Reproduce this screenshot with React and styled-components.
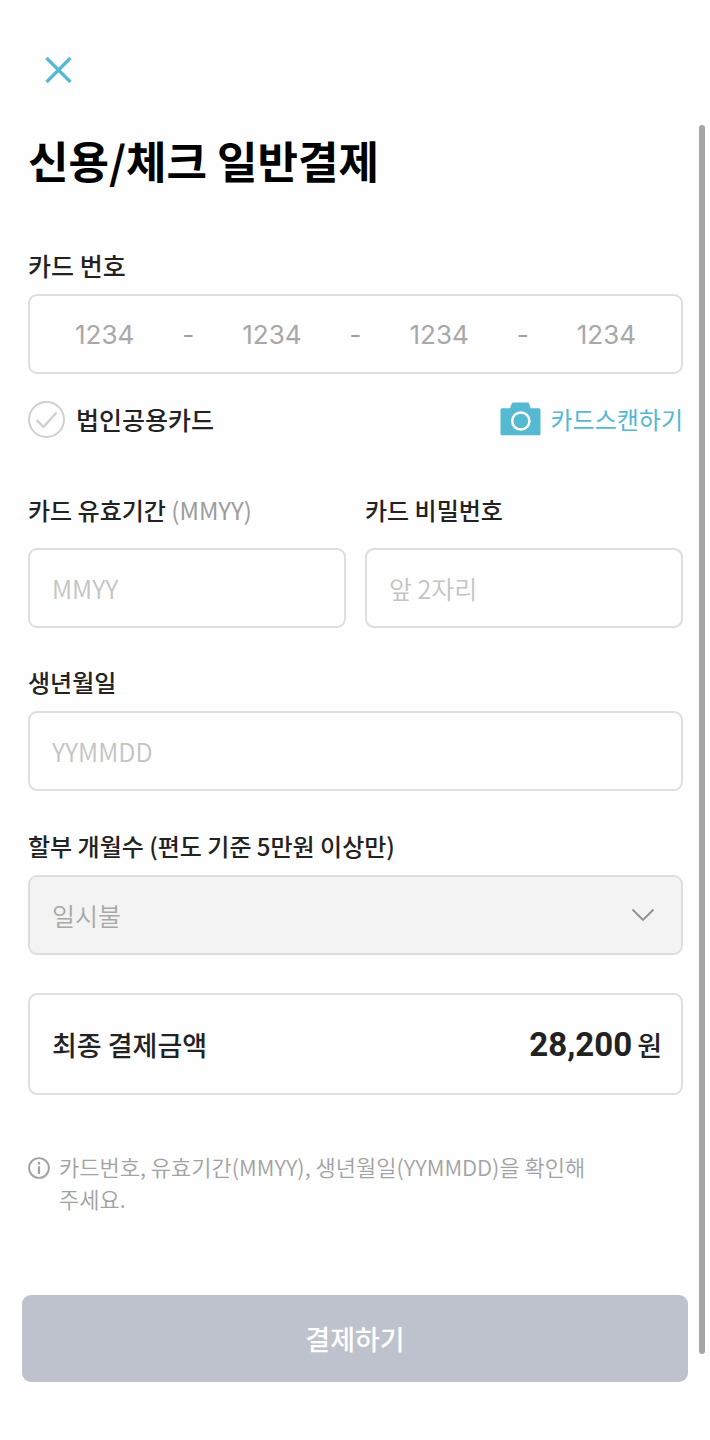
import React from "react";
import styled, { createGlobalStyle } from "styled-components";

const GlobalStyle = createGlobalStyle`
  *, *::before, *::after { box-sizing: border-box; }
  body {
    margin: 0;
    background: #fefefe;
    color: #222;
    font-family: "Noto Sans CJK KR", "Noto Sans", sans-serif;
  }
  button, input, select { font-family: inherit; }
`;

const Page = styled.div`
  position: relative;
  display: flex;
  flex-direction: column;
  padding: 40px 22px 57px;
`;

const ScrollThumb = styled.div`
  position: absolute;
  top: 125px;
  right: 5px;
  bottom: 85px;
  width: 6px;
  border-radius: 3px;
  background: #a5a5a5;
`;

const IconButton = styled.button`
  align-self: flex-start;
  display: flex;
  margin-left: 6px;
  padding: 14px;
  border: 0;
  background: none;
  color: #55b9d1;
`;

const Form = styled.form`
  display: flex;
  flex-direction: column;
  padding: 0 5px 0 6px;
`;

const Title = styled.h1`
  margin: 28px 0 56px;
  color: #000;
  font-size: 44px;
  font-weight: 700;
  line-height: 64px;
`;

const Field = styled.div`
  display: flex;
  flex-direction: column;
  gap: ${(p) => p.$gap || 12}px;
  min-width: 0;
`;

const FieldRow = styled.div`
  display: grid;
  grid-template-columns: 1fr 1fr;
  gap: 19px;
  margin: 55px 0 37px;
`;

const Label = styled.label`
  font-size: ${(p) => p.$size || 24}px;
  font-weight: 500;
  line-height: 34px;
`;

const Hint = styled.span`
  color: #9c9c9e;
  font-weight: 400;
`;

const boxBorder = `
  border: 2px solid #dedede;
  border-radius: 9px;
`;

const TextInput = styled.input`
  width: 100%;
  height: 80px;
  padding: 0 22px;
  ${boxBorder}
  background: transparent;
  color: #222;
  font-size: 25px;
  font-weight: 350;
  outline: 0;
  &::placeholder { color: #c4c4c4; opacity: 1; }
`;

const CardNumber = styled.div`
  display: flex;
  align-items: center;
  height: 80px;
  ${boxBorder}
  color: #a0a0a0;
  font-family: Inter, "Noto Sans CJK KR", sans-serif;
  font-size: 26px;
`;

const CardDigits = styled.input`
  flex: 1;
  min-width: 0;
  height: 100%;
  padding: 0;
  border: 0;
  background: transparent;
  font-size: 26px;
  text-align: center;
  outline: 0;
  &::placeholder { color: #a8a8a8; opacity: 1; }
`;

const Dash = styled.span`
  width: 18px;
  text-align: center;
`;

const CardOptions = styled.div`
  display: flex;
  align-items: center;
  justify-content: space-between;
  margin-top: 26px;
`;

const CheckLabel = styled.label`
  display: flex;
  align-items: center;
  gap: 11px;
  font-size: 25px;
  font-weight: 500;
  line-height: 38px;
`;

const CheckMark = styled.span`
  position: relative;
  display: flex;
  width: 37px;
  height: 37px;
  color: #d0d0d0;
  svg { position: absolute; inset: 0; pointer-events: none; }
`;

const CheckBox = styled.input`
  appearance: none;
  width: 37px;
  height: 37px;
  margin: 0;
  border: 2px solid #d0d0d0;
  border-radius: 50%;
  &:checked { border-color: #55b9d1; }
  &:checked + svg { color: #55b9d1; }
`;

const ScanButton = styled.button`
  display: flex;
  align-items: center;
  gap: 10px;
  padding: 0;
  border: 0;
  background: none;
  color: #55b9d1;
  font-size: 24px;
  font-weight: 400;
  line-height: 38px;
`;

const SelectWrap = styled.div`
  position: relative;
  svg { position: absolute; top: 33px; right: 28px; pointer-events: none; }
`;

const Select = styled.select`
  appearance: none;
  width: 100%;
  height: 80px;
  padding: 0 22px;
  ${boxBorder}
  background: #f3f3f3;
  color: #a8a8a8;
  font-size: 25px;
  font-weight: 350;
  opacity: 1;
`;

const Stack = styled.div`
  display: flex;
  flex-direction: column;
  gap: 38px;
`;

const Total = styled.div`
  display: flex;
  align-items: center;
  justify-content: space-between;
  height: 102px;
  margin-top: 38px;
  padding: 0 19px 0 22px;
  ${boxBorder}
  font-size: 27px;
  font-weight: 500;
`;

const Amount = styled.span`
  display: flex;
  align-items: baseline;
  gap: 5px;
`;

const AmountValue = styled.strong`
  font-family: Roboto, sans-serif;
  font-size: 33px;
  font-weight: 700;
`;

const Notice = styled.p`
  display: flex;
  gap: 9px;
  margin: 55px 0 0;
  max-width: 560px;
  color: #a2a2a4;
  font-size: 22px;
  font-weight: 350;
  line-height: 32px;
  svg { flex: none; margin-top: 7px; }
`;

const SubmitButton = styled.button`
  height: 87px;
  margin-top: 81px;
  border: 0;
  border-radius: 9px;
  background: #bdc2cd;
  color: #fff;
  font-size: 27px;
  font-weight: 500;
`;

const CloseIcon = () => (
  <svg width="32" height="32" viewBox="0 0 32 32" fill="none" stroke="currentColor" strokeWidth="3.2">
    <path d="M4.500 4l24 24M28.500 4l-24 24" />
  </svg>
);

const CheckIcon = () => (
  <svg width="37" height="37" viewBox="0 0 37 37" fill="none" stroke="currentColor" strokeWidth="2.4">
    <path d="M8.500 19l7 7L28.500 11.500" />
  </svg>
);

const CameraIcon = () => (
  <svg width="41" height="34" viewBox="0 0 41 34">
    <path
      fill="currentColor"
      d="M2 6.3h8l1.700-4.600Q12.300.5 13.500.5h14q1.200 0 1.700 1.200L30.700 6.300H39q1.500 0 1.500 1.500v24q0 1.500-1.500 1.500H2Q.5 33.300.5 31.800v-24Q.5 6.300 2 6.300z"
    />
    <circle cx="20.800" cy="19" r="8.600" fill="none" stroke="#fff" strokeWidth="2.500" />
  </svg>
);

const ChevronIcon = () => (
  <svg width="24" height="14" viewBox="0 0 24 14" fill="none" stroke="#8f8f8f" strokeWidth="1.800">
    <path d="M1.500 1.500L12 12 22.500 1.500" />
  </svg>
);

const InfoIcon = () => (
  <svg width="22" height="22" viewBox="0 0 22 22" fill="none" stroke="currentColor" strokeWidth="1.900">
    <circle cx="11" cy="11" r="9.900" />
    <path d="M11 9.300v7.700M11 5v2.500" strokeWidth="2.200" />
  </svg>
);

const parts = [1, 2, 3, 4];

export default function App() {
  return (
    <>
      <GlobalStyle />
      <Page>
        <IconButton type="button" aria-label="닫기">
          <CloseIcon />
        </IconButton>
        <Form id="payment" onSubmit={(e) => e.preventDefault()}>
          <Title>신용/체크 일반결제</Title>
          <Field>
            <Label $size={25} htmlFor="card-1">카드 번호</Label>
            <CardNumber>
              {parts.map((n) => (
                <React.Fragment key={n}>
                  {n > 1 && <Dash>-</Dash>}
                  <CardDigits id={`card-${n}`} aria-label={`카드 번호 ${n}`} placeholder="1234" maxLength={4} inputMode="numeric" />
                </React.Fragment>
              ))}
            </CardNumber>
          </Field>
          <CardOptions>
            <CheckLabel htmlFor="corporate">
              <CheckMark>
                <CheckBox id="corporate" type="checkbox" />
                <CheckIcon />
              </CheckMark>
              법인공용카드
            </CheckLabel>
            <ScanButton type="button">
              <CameraIcon />
              카드스캔하기
            </ScanButton>
          </CardOptions>
          <FieldRow>
            <Field $gap={21}>
              <Label htmlFor="expiry">
                카드 유효기간 <Hint>(MMYY)</Hint>
              </Label>
              <TextInput id="expiry" placeholder="MMYY" maxLength={4} />
            </Field>
            <Field $gap={21}>
              <Label htmlFor="pin">카드 비밀번호</Label>
              <TextInput id="pin" placeholder="앞 2자리" maxLength={2} />
            </Field>
          </FieldRow>
          <Stack>
            <Field>
              <Label htmlFor="birth">생년월일</Label>
              <TextInput id="birth" placeholder="YYMMDD" maxLength={6} />
            </Field>
            <Field>
              <Label htmlFor="months">할부 개월수 (편도 기준 5만원 이상만)</Label>
              <SelectWrap>
                <Select id="months" disabled defaultValue="1">
                  <option value="1">일시불</option>
                </Select>
                <ChevronIcon />
              </SelectWrap>
            </Field>
          </Stack>
          <Total>
            <span>최종 결제금액</span>
            <Amount>
              <AmountValue>28,200</AmountValue>원
            </Amount>
          </Total>
          <Notice>
            <InfoIcon />
            <span>카드번호, 유효기간(MMYY), 생년월일(YYMMDD)을 확인해 주세요.</span>
          </Notice>
        </Form>
        <SubmitButton type="submit" form="payment">결제하기</SubmitButton>
        <ScrollThumb />
      </Page>
    </>
  );
}
